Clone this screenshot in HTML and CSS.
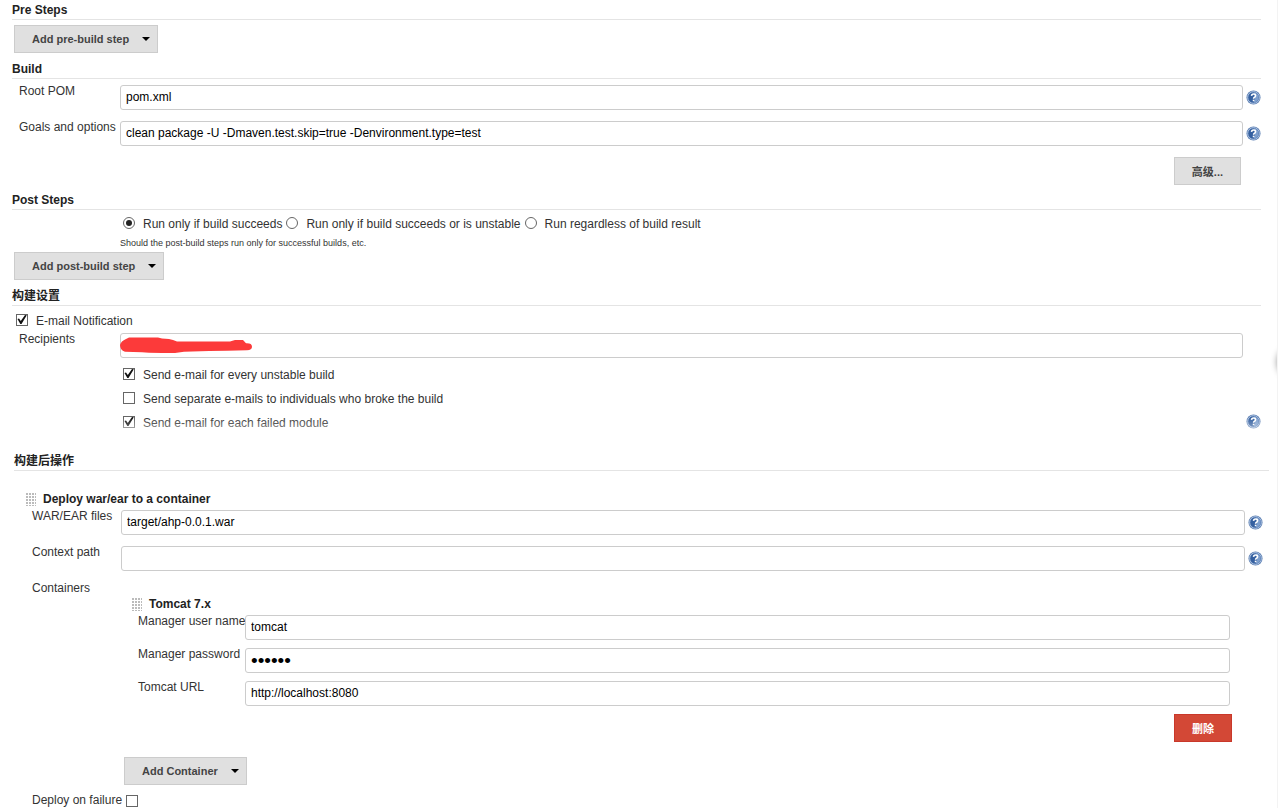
FILE: index.html
```html
<!DOCTYPE html>
<html>
  <head>
    <meta charset="utf-8">
    <title>Config [Jenkins]</title>
    <link rel="stylesheet" href="styles.css">
  </head>
  <body>
    <svg class="defs" aria-hidden="true">
      <symbol id="help-icon" viewBox="0 0 16 16">
        <circle cx="8" cy="8" r="7.5" fill="#5f82b5"/>
        <circle cx="8" cy="8" r="6.2" fill="#3560a0" stroke="#b9cce6" stroke-width="1"/>
        <path d="M8 2.5a5.5 5.5 0 0 1 0 11q3-5 0-11z" fill="#7d9fce"/>
        <path d="M5.9 6.3q.1-2 2.2-2t2.1 1.8q0 1-1.1 1.6-1 .6-1 1.6" fill="none" stroke="#fff" stroke-width="1.7"/>
        <rect x="7.2" y="10.3" width="1.8" height="1.7" fill="#fff"/>
      </symbol>
    </svg>
    <form class="config">
      <section class="part">
        <h2>Pre Steps</h2>
        <button type="button" class="btn menu">Add pre-build step</button>
        <h2>Build</h2>
        <div class="row">
          <label for="pom">Root POM</label>
          <input type="text" id="pom" value="pom.xml">
          <a href="#" class="help" aria-label="Help"><svg><use href="#help-icon"/></svg></a>
        </div>
        <div class="row">
          <label for="goals">Goals and options</label>
          <input type="text" id="goals" value="clean package -U -Dmaven.test.skip=true -Denvironment.type=test">
          <a href="#" class="help" aria-label="Help"><svg><use href="#help-icon"/></svg></a>
        </div>
        <div class="right">
          <button type="button" class="btn">高级...</button>
        </div>
        <h2>Post Steps</h2>
        <div class="radios">
          <label><input type="radio" name="post" checked>Run only if build succeeds</label>
          <label><input type="radio" name="post">Run only if build succeeds or is unstable</label>
          <label><input type="radio" name="post">Run regardless of build result</label>
        </div>
        <p class="note">Should the post-build steps run only for successful builds, etc.</p>
        <button type="button" class="btn menu">Add post-build step</button>
        <h2>构建设置</h2>
        <label class="check mail"><input type="checkbox" checked>E-mail Notification</label>
        <div class="row recipients">
          <label for="rcpt">Recipients</label>
          <div class="field">
            <input type="text" id="rcpt">
            <svg class="scribble" viewBox="0 0 134 18" aria-hidden="true">
              <path d="M1 8Q2 4 7 2L10 .5L39 .5L43 1.5L50 2L54 3L58 4.5L111 4.5L116 3L124 3L127 6.3Q133 6 133 9.7Q133 13 128 13.3L108 13.7L90 14L65 14.7L56 16L43 16L30 15.8L23 15.3L6 14.7Q1 13 1 8Z" fill="#fc3a3a"/>
            </svg>
          </div>
        </div>
        <div class="checks">
          <label class="check"><input type="checkbox" checked>Send e-mail for every unstable build</label>
          <label class="check"><input type="checkbox">Send separate e-mails to individuals who broke the build</label>
          <div class="last">
            <label class="check"><input type="checkbox" checked>Send e-mail for each failed module</label>
            <a href="#" class="help" aria-label="Help"><svg><use href="#help-icon"/></svg></a>
          </div>
        </div>
      </section>

      <section class="part post">
        <h2>构建后操作</h2>
        <div class="deploy">
          <h3><span class="grip"></span>Deploy war/ear to a container</h3>
          <div class="row">
            <label for="war">WAR/EAR files</label>
            <input type="text" id="war" value="target/ahp-0.0.1.war">
            <a href="#" class="help" aria-label="Help"><svg><use href="#help-icon"/></svg></a>
          </div>
          <div class="row">
            <label for="ctx">Context path</label>
            <input type="text" id="ctx">
            <a href="#" class="help" aria-label="Help"><svg><use href="#help-icon"/></svg></a>
          </div>
          <div class="caption">Containers</div>
          <div class="container">
            <h3><span class="grip"></span>Tomcat 7.x</h3>
            <div class="row">
              <label for="user">Manager user name</label>
              <input type="text" id="user" value="tomcat">
            </div>
            <div class="row">
              <label for="pass">Manager password</label>
              <input type="password" id="pass" value="tomcat">
            </div>
            <div class="row">
              <label for="url">Tomcat URL</label>
              <input type="text" id="url" value="http://localhost:8080">
            </div>
            <div class="right">
              <button type="button" class="btn danger">删除</button>
            </div>
          </div>
          <button type="button" class="btn menu add">Add Container</button>
          <div class="failure">
            <label for="fail">Deploy on failure</label>
            <input type="checkbox" id="fail">
          </div>
        </div>
      </section>
      <span class="knob"></span>
    </form>
  </body>
</html>
```
FILE: styles.css
```css
* { box-sizing: border-box; }
body {
  margin: 0;
  background-color: #fff;
  color: #333;
  font: 12px/16px "Liberation Sans", Arial, "Noto Sans CJK SC", sans-serif; }
.defs {
  display: block;
  width: 0;
  height: 0; }
.config {
  position: relative;
  overflow: hidden;
  border-right: 1px solid #f3f3f3; }
.part {
  padding: 0 16px 0 12px; }
h2, h3 {
  margin: 0;
  color: #222;
  font-size: 12px;
  font-weight: bold; }
h2 {
  height: 20px;
  margin-bottom: 5px;
  line-height: 20px;
  border-bottom: 1px solid #e4e4e4; }
h2 + .row {
  margin-top: 6px; }

/* buttons */
.btn {
  display: block;
  height: 28px;
  padding: 0 17px;
  border: 1px solid #ccc;
  background-color: #e0e0e0;
  color: #444;
  font: bold 11px "Liberation Sans", Arial, "Noto Sans CJK SC", sans-serif; }
.menu {
  display: flex;
  align-items: center;
  gap: 13px;
  margin: 0 2px 6px;
  padding-right: 7px; }
.menu::after {
  content: "";
  border: 4px solid transparent;
  border-top-color: #000;
  border-bottom: 0; }
.danger {
  border-color: #c9382a;
  background-color: #d34836;
  color: #fff; }
.right {
  display: flex;
  justify-content: flex-end;
  padding-right: 20px;
  margin-bottom: 5px; }

/* label, field and help icon */
.row {
  display: grid;
  grid-template-columns: 101px 1fr 18px;
  height: 25px;
  margin-bottom: 11px;
  padding-left: 7px; }
.row label {
  line-height: 12px;
  white-space: nowrap; }
input[type=text], input[type=password] {
  width: 100%;
  height: 25px;
  padding: 0 5px 2px;
  border: 1px solid #ccc;
  border-radius: 3px;
  background-color: #fff;
  color: #000;
  font: inherit; }
input[type=password] {
  padding-bottom: 0;
  font-size: 19px; }
.help {
  display: block;
  align-self: center;
  justify-self: end;
  width: 15px;
  height: 15px; }
.help svg {
  display: block;
  width: 15px;
  height: 15px; }
.field {
  position: relative; }
.scribble {
  position: absolute;
  left: -1px;
  top: 4px;
  width: 134px;
  height: 18px; }

/* ticks */
input[type=checkbox], input[type=radio] {
  appearance: none;
  flex: none;
  width: 12px;
  height: 12px;
  margin: 0 8px 3px 0;
  border: 1px solid #666;
  background-color: #fff; }
input[type=checkbox]:checked::before {
  content: "";
  display: block;
  width: 10px;
  height: 10px;
  background-color: #111;
  clip-path: polygon(5% 45%, 20% 40%, 38% 65%, 80% 5%, 98% 8%, 45% 95%, 33% 95%); }
input[type=radio] {
  border-radius: 50%; }
input[type=radio]:checked::before {
  content: "";
  display: block;
  width: 6px;
  height: 6px;
  margin: 2px;
  border-radius: 50%;
  background-color: #222; }
.radios {
  display: flex;
  gap: 4px;
  padding-left: 111px; }
.radios label, .check {
  display: flex;
  align-items: center;
  height: 18px; }
.note {
  margin: 2px 0 1px 108px;
  font-size: 9px; }
.mail {
  margin: 6px 0 3px 4px; }
.recipients {
  margin-bottom: 8px; }
.checks {
  display: flex;
  flex-direction: column;
  gap: 6px;
  padding-left: 111px; }
.last {
  position: relative;
  display: flex;
  justify-content: space-between; }
.last .help {
  margin-bottom: 3px; }
.last::after {
  content: "";
  position: absolute;
  inset: 0;
  background: linear-gradient(rgba(255,255,255,0) 20%, rgba(255,255,255,.5));
  pointer-events: none; }

/* post-build actions */
.post {
  padding: 19px 8px 0 14px; }
.deploy {
  padding: 15px 6px 0 10px; }
h3 {
  display: flex;
  align-items: center;
  gap: 7px;
  height: 16px;
  margin-bottom: 3px;
  padding-left: 2px; }
.grip {
  width: 10px;
  height: 13px;
  background: radial-gradient(circle at 1px 1px, #bbb 1px, transparent 1px) 0 0 / 3px 3px; }
.deploy .row {
  grid-template-columns: 89px 1fr 18px;
  padding-left: 8px; }
.caption {
  padding: 0 0 0 8px;
  line-height: 12px; }
.container {
  padding: 2px 33px 0 106px; }
.deploy .container .row {
  grid-template-columns: 107px 1fr;
  margin-bottom: 8px; }
.container .right {
  padding: 0;
  margin: 0 -2px 15px 0; }
.add {
  margin-left: 100px; }
.failure {
  display: flex;
  align-items: center;
  gap: 4px;
  height: 18px;
  padding-left: 8px; }
.failure input[type=checkbox] {
  margin: 2px 0 0; }

/* edge of the side handle */
.knob {
  position: absolute;
  right: -32px;
  top: 346px;
  width: 32px;
  height: 32px;
  border-radius: 50%;
  background-color: #777;
  box-shadow: 0 0 6px #999; }
```
